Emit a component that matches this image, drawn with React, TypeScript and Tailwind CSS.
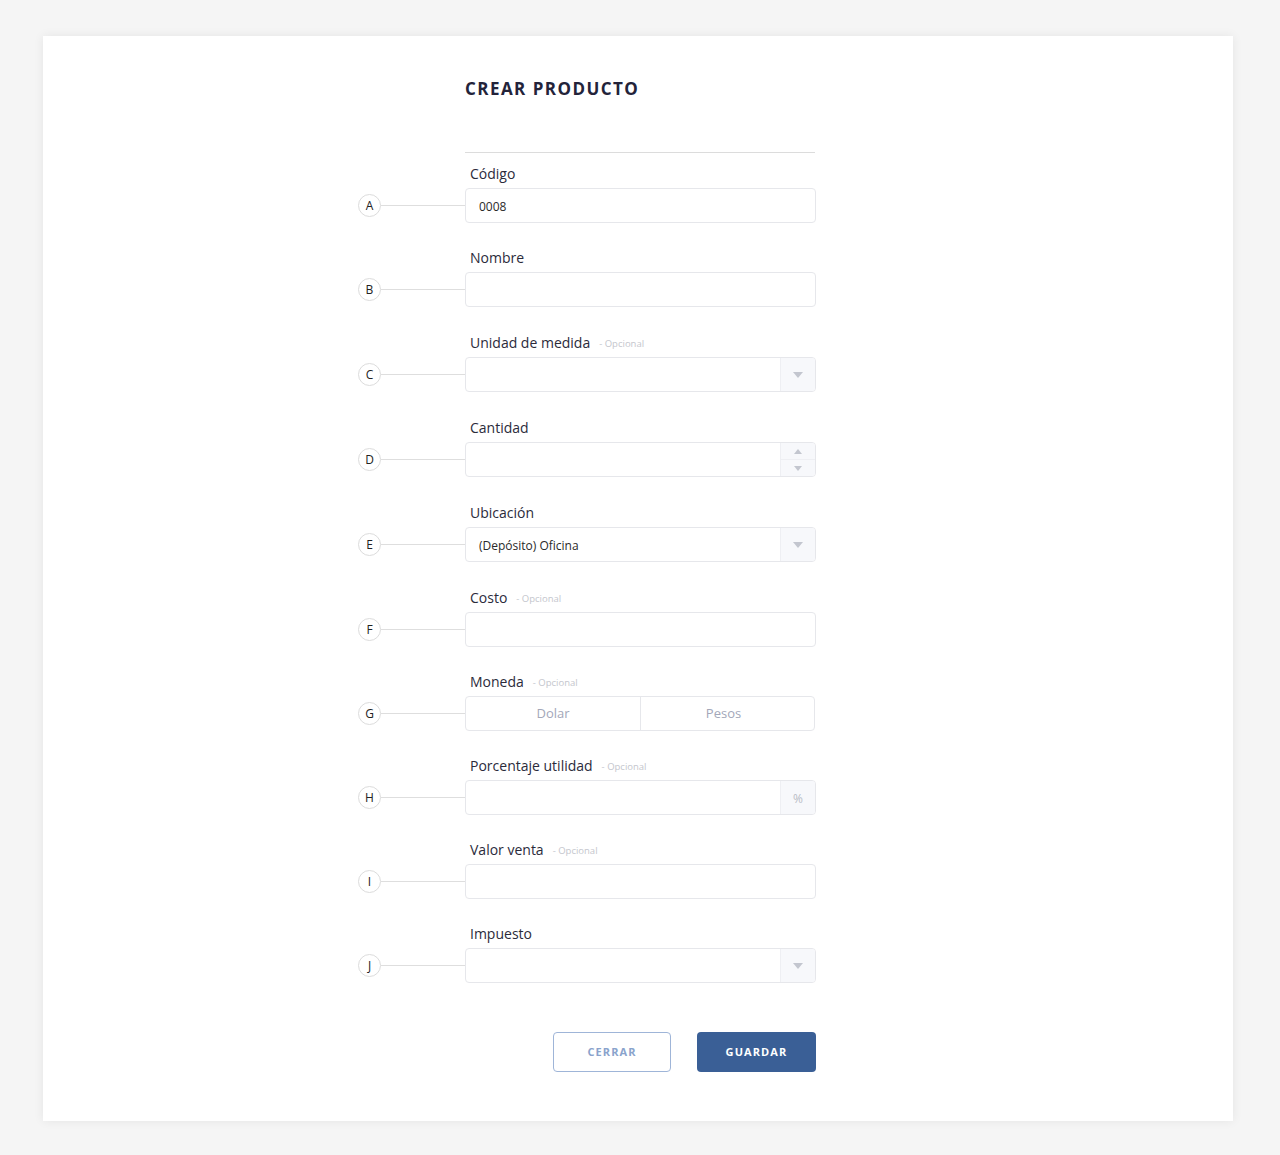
import React from "react";

const font = { fontFamily: '"Open Sans", "Noto Sans", sans-serif' };

function Marker({ letter }: { letter: string }) {
  return (
    <div className="flex items-center w-[107px] shrink-0">
      <div className="w-[23px] h-[23px] rounded-full border border-[#dcdcdc] bg-white flex items-center justify-center text-[12px] text-[#222] shrink-0">
        {letter}
      </div>
      <div className="flex-1 h-px bg-[#dedede]" />
    </div>
  );
}

function Caret() {
  return (
    <svg width="10" height="6" viewBox="0 0 10 6">
      <path d="M0 0 L10 0 L5 6 Z" fill="#c3c6cf" />
    </svg>
  );
}

type Kind = "text" | "select" | "number" | "segment" | "percent";

function Field({
  letter,
  label,
  optional,
  kind = "text",
  value,
  gap,
}: {
  letter: string;
  label: string;
  optional?: boolean;
  kind?: Kind;
  value?: string;
  gap: string;
}) {
  let control: React.ReactNode;
  const base = "w-[351px] h-[35px] border border-[#e6e7eb] rounded-[4px] bg-white flex overflow-hidden";
  if (kind === "segment") {
    control = (
      <div className="w-[350px] h-[35px] border border-[#e6e7eb] rounded-[4px] bg-white flex overflow-hidden">
        <div className="w-[175px] flex items-center justify-center text-[13px] text-[#a3a7b9] border-r border-[#e6e7eb]">Dolar</div>
        <div className="flex-1 flex items-center justify-center text-[13px] text-[#a3a7b9] pr-[8px]">Pesos</div>
      </div>
    );
  } else {
    control = (
      <div className={base}>
        <div className="flex-1 flex items-center pl-[13px] pt-[2px] text-[12px] text-[#2a2a2a]">{value}</div>
        {kind === "select" && (
          <div className="w-[35px] bg-[#f7f8fb] border-l border-[#eeeff3] flex items-center justify-center">
            <Caret />
          </div>
        )}
        {kind === "number" && (
          <div className="w-[35px] bg-[#f7f8fb] border-l border-[#eeeff3] flex flex-col">
            <div className="flex-1 flex items-center justify-center border-b border-[#eeeff3]">
              <svg width="8" height="5" viewBox="0 0 8 5"><path d="M0 5 L4 0 L8 5 Z" fill="#c3c6cf" /></svg>
            </div>
            <div className="flex-1 flex items-center justify-center">
              <svg width="8" height="5" viewBox="0 0 8 5"><path d="M0 0 L8 0 L4 5 Z" fill="#c3c6cf" /></svg>
            </div>
          </div>
        )}
        {kind === "percent" && (
          <div className="w-[35px] bg-[#f7f8fb] border-l border-[#eeeff3] flex items-center justify-center text-[12px] text-[#b9bcc6] pt-[2px]">
            %
          </div>
        )}
      </div>
    );
  }
  return (
    <div className={"flex flex-col " + gap}>
      <div className="pl-[112px] h-[19px] flex items-center mb-[5px]">
        <span className="text-[14px] text-[#2b2b3b]">{label}</span>
        {optional && <span className="text-[9.5px] text-[#c4c6cd] ml-[9px] mt-[4px]">- Opcional</span>}
      </div>
      <div className="flex items-center">
        <Marker letter={letter} />
        {control}
      </div>
    </div>
  );
}

export default function App() {
  return (
    <div className="min-h-[1155px] bg-[#f5f5f5] pt-[36px] pl-[43px]" style={font}>
      <div className="w-[1190px] h-[1085px] bg-white shadow-[0_0_10px_rgba(0,0,0,0.07)] pt-[41px] pl-[315px]">
        <div className="w-[458px]">
          <div className="pl-[107px]">
            <h1 className="text-[17px] leading-6 font-bold tracking-[1.45px] text-[#23233a]">CREAR PRODUCTO</h1>
            <div className="mt-[51px] h-px bg-[#dcdcdc] w-[350px]" />
          </div>
          <div className="mt-[11px] flex flex-col">
            <Field letter="A" label="Código" value="0008" gap="mb-[25px]" />
            <Field letter="B" label="Nombre" gap="mb-[26px]" />
            <Field letter="C" label="Unidad de medida" optional kind="select" gap="mb-[26px]" />
            <Field letter="D" label="Cantidad" kind="number" gap="mb-[26px]" />
            <Field letter="E" label="Ubicación" kind="select" value="(Depósito) Oficina" gap="mb-[26px]" />
            <Field letter="F" label="Costo" optional gap="mb-[25px]" />
            <Field letter="G" label="Moneda" optional kind="segment" gap="mb-[25px]" />
            <Field letter="H" label="Porcentaje utilidad" optional kind="percent" gap="mb-[25px]" />
            <Field letter="I" label="Valor venta" optional gap="mb-[25px]" />
            <Field letter="J" label="Impuesto" kind="select" gap="mb-0" />
          </div>
          <div className="mt-[49px] flex justify-end gap-[26px] w-[458px]">
            <button className="w-[118px] h-[40px] rounded-[4px] border border-[#9fb5d8] text-[#8aa3cc] text-[11px] font-bold tracking-[1.1px] bg-white">
              CERRAR
            </button>
            <button className="w-[119px] h-[40px] rounded-[4px] bg-[#3a5f96] text-white text-[11px] font-bold tracking-[1.1px]">
              GUARDAR
            </button>
          </div>
        </div>
      </div>
    </div>
  );
}
